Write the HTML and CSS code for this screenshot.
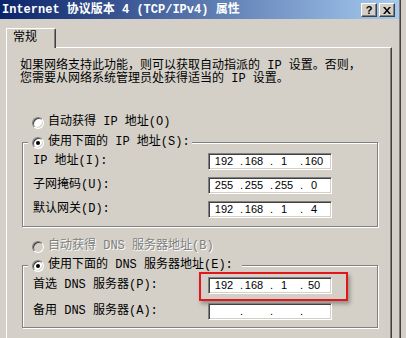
FILE: index.html
```html
<!DOCTYPE html>
<html lang="zh-CN">
<head>
  <meta charset="UTF-8">
  <title>Internet 协议版本 4 (TCP/IPv4) 属性</title>
  <link rel="stylesheet" href="styles.css">
</head>
<body>
  <div class="window">
    <div class="titlebar">
      <span class="title">Internet 协议版本 4 (TCP/IPv4) 属性</span>
      <div class="caption-buttons">
        <span class="cap-btn">?</span>
        <span class="cap-btn">
          <svg width="8" height="7" viewBox="0 0 8 7">
            <path d="M0 0h2l2 2.5L6 0h2L5 3.5 8 7H6L4 4.5 2 7H0l3-3.5z" fill="#000"/>
          </svg>
        </span>
      </div>
    </div>

    <div class="tabs">
      <div class="tab">常规</div>
    </div>

    <div class="panel">
      <p class="intro">如果网络支持此功能，则可以获取自动指派的 IP 设置。否则，<br>您需要从网络系统管理员处获得适当的 IP 设置。</p>

      <div class="option option-auto"><span class="radio"></span>自动获得 IP 地址(O)</div>

      <fieldset class="group group-ip">
        <legend class="legend legend-ip"><span class="option"><span class="radio checked"></span>使用下面的 IP 地址(S):</span></legend>
        <div class="rows">
          <span class="label">IP 地址(I):</span>
          <div class="ip"><span class="f">192</span><span class="d">.</span><span class="f">168</span><span class="d">.</span><span class="f">1</span><span class="d">.</span><span class="f">160</span></div>
          <span class="label">子网掩码(U):</span>
          <div class="ip"><span class="f">255</span><span class="d">.</span><span class="f">255</span><span class="d">.</span><span class="f">255</span><span class="d">.</span><span class="f">0</span></div>
          <span class="label">默认网关(D):</span>
          <div class="ip"><span class="f">192</span><span class="d">.</span><span class="f">168</span><span class="d">.</span><span class="f">1</span><span class="d">.</span><span class="f">4</span></div>
        </div>
      </fieldset>

      <div class="option option-disabled"><span class="radio disabled"></span>自动获得 DNS 服务器地址(B)</div>

      <fieldset class="group group-dns">
        <legend class="legend legend-dns"><span class="option"><span class="radio checked"></span>使用下面的 DNS 服务器地址(E):</span></legend>
        <div class="rows rows-dns">
          <span class="label">首选 DNS 服务器(P):</span>
          <div class="ip marked"><span class="f">192</span><span class="d">.</span><span class="f">168</span><span class="d">.</span><span class="f">1</span><span class="d">.</span><span class="f">50</span></div>
          <span class="label">备用 DNS 服务器(A):</span>
          <div class="ip"><span class="f"></span><span class="d">.</span><span class="f"></span><span class="d">.</span><span class="f"></span><span class="d">.</span><span class="f"></span></div>
        </div>
      </fieldset>
    </div>
  </div>
</body>
</html>
```

FILE: styles.css
```css
body {
  margin: 0;
  background-color: #d4d0c8;
  font-family: "Liberation Mono", "Noto Sans CJK SC", monospace;
  font-size: 12px;
  line-height: 13px;
  color: #000;
}

.window {
  width: 399px;
  height: 338px;
  overflow: hidden;
  border-right: 1px solid #808080;
  box-shadow: 1px 0 0 #404040;
}

.titlebar {
  height: 19px;
  display: flex;
  justify-content: space-between;
  align-items: flex-start;
  background: linear-gradient(to right, #0a246a, #a6caf0);
}

.title {
  color: #fff;
  font-weight: bold;
  padding: 4px 0 0 2px;
}

.caption-buttons {
  display: flex;
  gap: 2px;
  padding: 3px 4px 0 0;
}

.cap-btn {
  width: 14px;
  height: 12px;
  display: flex;
  align-items: center;
  justify-content: center;
  background-color: #d4d0c8;
  border: 1px solid;
  border-color: #fff #404040 #404040 #fff;
  box-shadow: inset -1px -1px 0 #808080;
  font-family: "Liberation Sans", sans-serif;
  font-weight: bold;
  font-size: 11px;
}

.tabs {
  display: flex;
  padding: 9px 0 0 6px;
}

.tab {
  position: relative;
  z-index: 1;
  height: 20px;
  box-sizing: border-box;
  margin-bottom: -1px;
  padding: 3px 18px 0 6px;
  background-color: #d4d0c8;
  border-top: 1px solid #fff;
  border-left: 1px solid #fff;
  border-right: 1px solid #404040;
  border-top-right-radius: 2px;
  box-shadow: inset -1px 0 0 #808080;
}

.panel {
  width: 386px;
  height: 300px;
  box-sizing: border-box;
  margin-left: 6px;
  border-top: 1px solid #fff;
  border-left: 1px solid #fff;
  border-right: 1px solid #404040;
  box-shadow: inset -1px 0 0 #808080;
}

.intro {
  margin: 12px 0 0 13px;
  line-height: 13px;
}

.option {
  display: flex;
  align-items: center;
  gap: 4px;
}

.option-auto {
  margin: 30px 0 0 25px;
}

.option-disabled {
  margin: 13px 0 0 25px;
  color: #808080;
  text-shadow: 1px 1px 0 #fff;
}

.radio {
  width: 12px;
  height: 12px;
  box-sizing: border-box;
  flex-shrink: 0;
  position: relative;
  border-radius: 50%;
  background-color: #fff;
  border: 1px solid;
  border-color: #808080 #fff #fff #808080;
  box-shadow: inset 1px 1px 0 #404040, inset -1px -1px 0 #d4d0c8;
}

.radio.checked::after {
  content: "";
  position: absolute;
  left: 3px;
  top: 3px;
  width: 4px;
  height: 4px;
  border-radius: 50%;
  background-color: #000;
}

.radio.disabled {
  background-color: #d4d0c8;
}

.group {
  width: 356px;
  box-sizing: border-box;
  min-inline-size: 0;
  margin: 7px 0 0 15px;
  padding: 4px 0 8px 10px;
  border: 1px solid #808080;
  box-shadow: 1px 1px 0 #fff, inset 1px 1px 0 #fff;
}

.group-dns {
  margin-top: 6px;
  padding: 5px 0 7px 10px;
}

.legend {
  margin-left: -5px;
  padding: 0 2px 0 4px;
  background-color: #d4d0c8;
}

.legend-dns {
  padding-right: 9px;
}

.rows {
  display: grid;
  grid-template-columns: 175px 124px;
  row-gap: 7px;
  align-items: center;
}

.rows-dns {
  row-gap: 9px;
}

.ip {
  position: relative;
  height: 17px;
  box-sizing: border-box;
  display: flex;
  padding-left: 4px;
  background-color: #fff;
  border: 1px solid;
  border-color: #808080 #fff #fff #808080;
  box-shadow: inset 1px 1px 0 #404040, inset -1px -1px 0 #d4d0c8;
  font-family: "Liberation Sans", sans-serif;
  font-size: 11px;
  line-height: 15px;
}

.ip .f {
  width: 22px;
  text-align: center;
}

.ip .d {
  width: 8px;
  text-align: right;
}

.marked::after {
  content: "";
  position: absolute;
  left: -10px;
  top: -6px;
  width: 149px;
  height: 29px;
  box-sizing: border-box;
  border: 2px solid #e3161b;
  box-shadow: 2px 3px 4px rgba(0, 0, 0, 0.3);
}
```
